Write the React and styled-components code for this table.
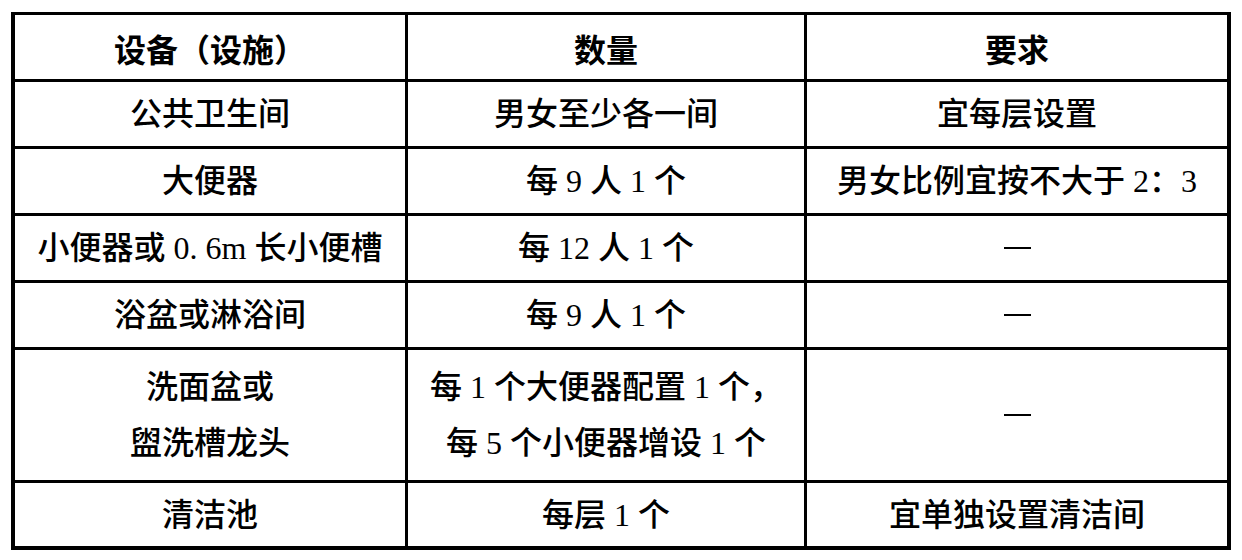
import React from "react";
import styled, { createGlobalStyle } from "styled-components";

const GlobalStyle = createGlobalStyle`
  html, body {
    margin: 0;
    padding: 0;
    background: #ffffff;
  }
  body {
    font-family: "Liberation Serif", "Noto Sans CJK SC", serif;
    color: #000000;
  }
`;

const rows = [
  { name: ["公共卫生间"], count: ["男女至少各一间"], need: "宜每层设置" },
  { name: ["大便器"], count: ["每 9 人 1 个"], need: "男女比例宜按不大于 2：3" },
  { name: ["小便器或 0. 6m 长小便槽"], count: ["每 12 人 1 个"], need: "—" },
  { name: ["浴盆或淋浴间"], count: ["每 9 人 1 个"], need: "—" },
  {
    name: ["洗面盆或", "盥洗槽龙头"],
    count: ["每 1 个大便器配置 1 个，", "每 5 个小便器增设 1 个"],
    need: "—",
  },
  { name: ["清洁池"], count: ["每层 1 个"], need: "宜单独设置清洁间" },
];

export default function App() {
  return (
    <>
      <GlobalStyle />
      <Page>
        <Table>
          <HeadCell>设备（设施）</HeadCell>
          <HeadCell>数量</HeadCell>
          <HeadCell>要求</HeadCell>
          {rows.map((row, i) => (
            <React.Fragment key={i}>
              <Cell>
                {row.name.map((line) => (
                  <Line key={line}>{line}</Line>
                ))}
              </Cell>
              <Cell>
                {row.count.map((line) => (
                  <Line key={line}>{line}</Line>
                ))}
              </Cell>
              <Cell>
                {row.need === "—" ? <Dash /> : <Line>{row.need}</Line>}
              </Cell>
            </React.Fragment>
          ))}
        </Table>
      </Page>
    </>
  );
}

const Page = styled.div`
  padding: 12px 0 0 11px;
`;

const Table = styled.div`
  display: grid;
  grid-template-columns: 390px 396px 420px;
  grid-template-rows: 64px 64px 64px 64px 64px 130px 63px;
  gap: 3px;
  width: max-content;
  background: #000000;
  border-top: 3px solid #000000;
  border-bottom: 4px solid #000000;
  border-left: 4px solid #000000;
  border-right: 4px solid #000000;
`;

const Cell = styled.div`
  background: #ffffff;
  display: flex;
  flex-direction: column;
  align-items: center;
  justify-content: center;
  font-size: 32px;
  font-weight: 500;
  line-height: 56px;
  white-space: nowrap;
`;

const HeadCell = styled(Cell)`
  font-family: "Noto Sans CJK SC", sans-serif;
  font-weight: 700;
  padding-top: 2px;
`;

const Line = styled.span`
  display: block;
`;

const Dash = styled.span`
  display: block;
  width: 27px;
  height: 2px;
  background: #000000;
`;
